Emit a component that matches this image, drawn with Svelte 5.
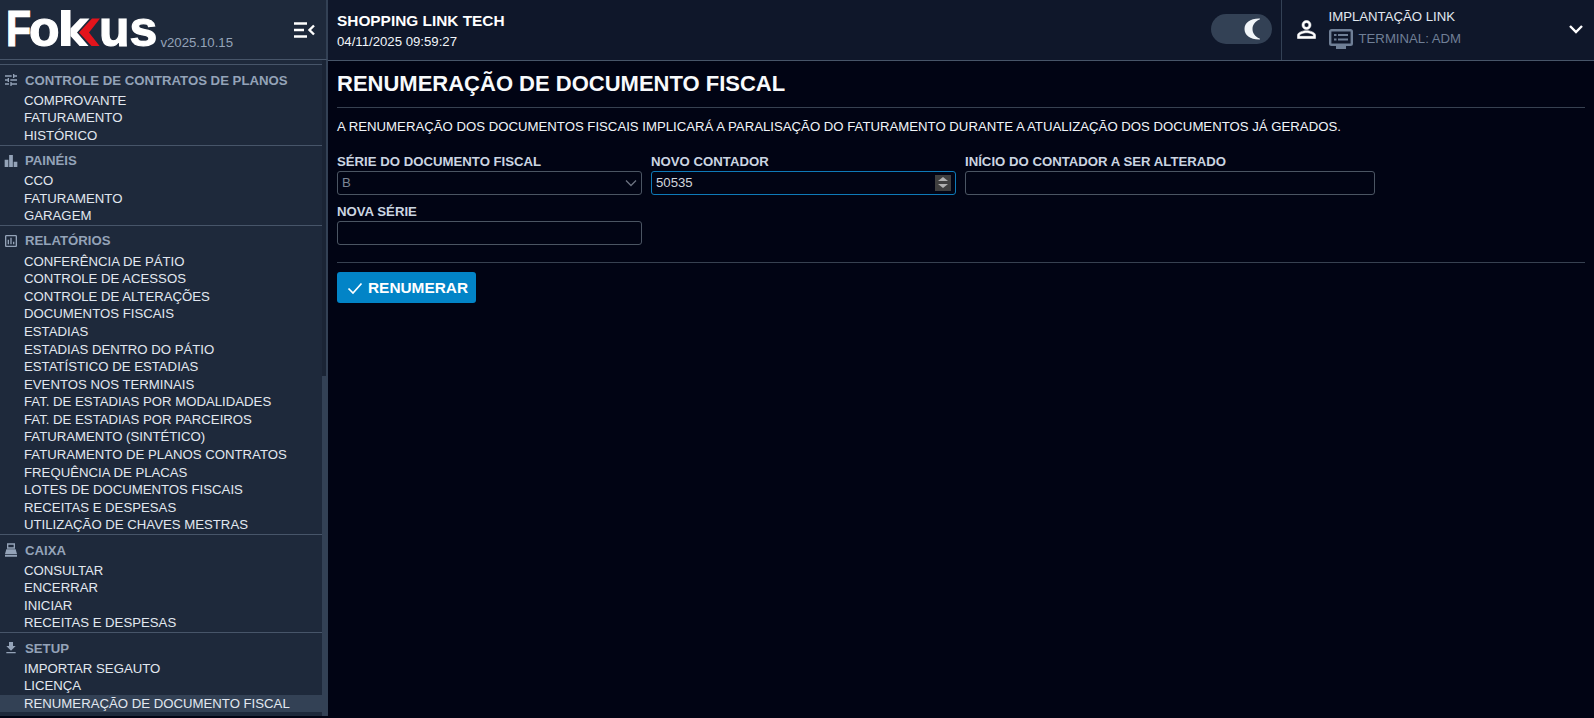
<script>
	const sections = [
		{ icon: 'tune', title: 'CONTROLE DE CONTRATOS DE PLANOS', items: ['COMPROVANTE', 'FATURAMENTO', 'HISTÓRICO'] },
		{ icon: 'bars', title: 'PAINÉIS', items: ['CCO', 'FATURAMENTO', 'GARAGEM'] },
		{
			icon: 'report',
			title: 'RELATÓRIOS',
			items: [
				'CONFERÊNCIA DE PÁTIO',
				'CONTROLE DE ACESSOS',
				'CONTROLE DE ALTERAÇÕES',
				'DOCUMENTOS FISCAIS',
				'ESTADIAS',
				'ESTADIAS DENTRO DO PÁTIO',
				'ESTATÍSTICO DE ESTADIAS',
				'EVENTOS NOS TERMINAIS',
				'FAT. DE ESTADIAS POR MODALIDADES',
				'FAT. DE ESTADIAS POR PARCEIROS',
				'FATURAMENTO (SINTÉTICO)',
				'FATURAMENTO DE PLANOS CONTRATOS',
				'FREQUÊNCIA DE PLACAS',
				'LOTES DE DOCUMENTOS FISCAIS',
				'RECEITAS E DESPESAS',
				'UTILIZAÇÃO DE CHAVES MESTRAS'
			]
		},
		{ icon: 'register', title: 'CAIXA', items: ['CONSULTAR', 'ENCERRAR', 'INICIAR', 'RECEITAS E DESPESAS'] },
		{ icon: 'download', title: 'SETUP', items: ['IMPORTAR SEGAUTO', 'LICENÇA', 'RENUMERAÇÃO DE DOCUMENTO FISCAL'] }
	];
	const active = 'RENUMERAÇÃO DE DOCUMENTO FISCAL';
</script>

<div class="page">
	<aside class="sidebar">
		<div class="brand">
			<div class="logo">
				<span class="logo-f">F</span><span class="logo-text">o</span><svg class="logo-k" viewBox="0 0 41 36.500" width="41" height="36.500">
					<path d="M0 0h9.500v36.500H0z" fill="#fff" />
					<path d="M9.500 18.500 19 8.500h9.500L16 22.500l12 14h-9l-9.500-10.500z" fill="#fff" />
					<path d="M18 22.500 31 8.500h8L28 22.500l11 14h-8z" fill="#e3141c" />
				</svg><span class="logo-text logo-us">us</span>
			</div>
			<span class="version">v2025.10.15</span>
			<button class="menu-toggle" aria-label="Recolher menu">
				<svg viewBox="0 0 24 24" width="24" height="24">
					<path d="M2 5.500h13M2 12h10M2 18.500h13" stroke="#fff" stroke-width="2.400" fill="none" />
					<path d="M22 7.500 17.500 12l4.500 4.500" stroke="#fff" stroke-width="2.400" fill="none" />
				</svg>
			</button>
		</div>
		<div class="menu-wrap">
			<nav class="menu">
				{#each sections as section}
					<section class="group">
						<h3>
							<svg class="group-icon" viewBox="0 0 24 24" width="16" height="16">
								{#if section.icon === 'tune'}
									<path d="M3 17v2h6v-2H3zM3 5v2h10V5H3zm10 16v-2h8v-2h-8v-2h-2v6h2zM7 9v2H3v2h4v2h2V9H7zm14 4v-2H11v2h10zm-6-4h2V7h4V5h-4V3h-2v6z" fill="currentColor" />
								{:else if section.icon === 'bars'}
									<path d="M2.500 10h5.500v11H2.500zM9.200 3h5.600v18H9.200zM16 13h5.500v8H16z" fill="currentColor" />
								{:else if section.icon === 'report'}
									<path d="M19 3H5c-1.100 0-2 .9-2 2v14c0 1.100.9 2 2 2h14c1.100 0 2-.9 2-2V5c0-1.100-.9-2-2-2zm0 16H5V5h14v14zM7 10h2v7H7zm4-3h2v10h-2zm4 6h2v4h-2z" fill="currentColor" />
								{:else if section.icon === 'register'}
									<path d="M6 2h12v8H6zM8 4v4h8V4zM5 11h14l2 7H3zM3 19h18v3H3z" fill="currentColor" fill-rule="evenodd" />
								{:else}
									<path d="M19 9h-4V3H9v6H5l7 7 7-7zM5 18v2h14v-2H5z" fill="currentColor" />
								{/if}
							</svg>
							{section.title}
						</h3>
						<ul>
							{#each section.items as item}
								<li class:active={item === active}>{item}</li>
							{/each}
						</ul>
					</section>
				{/each}
			</nav>
			<div class="scrollbar"><div class="thumb"></div></div>
		</div>
	</aside>

	<div class="main">
		<header class="topbar">
			<div class="company">
				<strong>SHOPPING LINK TECH</strong>
				<span>04/11/2025 09:59:27</span>
			</div>
			<div class="theme-toggle">
				<svg class="moon" viewBox="0 0 17 22" width="17" height="22">
					<path d="M15 .5C6 .5.5 5 .5 11S6 21.500 15 21.500c1 0 1.500-.5.5-1C11 18.500 8.500 15 8.500 11S11 3.500 15.500 1.500c1-.5.5-1-.5-1z" fill="#f1f5f9" />
				</svg>
			</div>
			<div class="user">
				<svg class="user-icon" viewBox="0 0 24 24" width="27" height="27">
					<path d="M12 5.900a2.100 2.100 0 1 1 0 4.200 2.100 2.100 0 0 1 0-4.200m0 9c2.970 0 6.100 1.460 6.100 2.100v1.100H5.900V17c0-.64 3.130-2.100 6.100-2.100M12 4C9.790 4 8 5.790 8 8s1.790 4 4 4 4-1.790 4-4-1.790-4-4-4zm0 9c-2.670 0-8 1.340-8 4v3h16v-3c0-2.660-5.330-4-8-4z" fill="#fff" stroke="#fff" stroke-width=".5" />
				</svg>
				<div class="user-text">
					<span class="user-name">IMPLANTAÇÃO LINK</span>
					<span class="terminal">
						<svg viewBox="0 0 24 20" width="24" height="20">
							<path d="M2.500 1.200h19a1.300 1.300 0 0 1 1.300 1.300v12a1.300 1.300 0 0 1-1.300 1.300h-19a1.300 1.300 0 0 1-1.300-1.300v-12a1.300 1.300 0 0 1 1.300-1.300z" stroke="currentColor" stroke-width="2.400" fill="none" />
							<path d="M5 5h2.500v2H5zM9 5h10v2H9zM5 9.500h2.500v2H5zM9 9.500h10v2H9z" fill="currentColor" />
							<path d="M7 17h10v3H7z" fill="currentColor" />
						</svg>
						TERMINAL: ADM
					</span>
				</div>
				<svg class="chevron" viewBox="0 0 16 16" width="16" height="16">
					<path d="M2 5l6 6 6-6" stroke="#fff" stroke-width="2.400" fill="none" />
				</svg>
			</div>
		</header>

		<main class="content">
			<h1>RENUMERAÇÃO DE DOCUMENTO FISCAL</h1>
			<hr />
			<p class="notice">
				A RENUMERAÇÃO DOS DOCUMENTOS FISCAIS IMPLICARÁ A PARALISAÇÃO DO FATURAMENTO DURANTE A ATUALIZAÇÃO DOS DOCUMENTOS JÁ GERADOS.
			</p>
			<div class="form">
				<div class="field">
					<span class="label">SÉRIE DO DOCUMENTO FISCAL</span>
					<div class="control select">
						<span>B</span>
						<svg viewBox="0 0 12 8" width="12" height="8">
							<path d="M1 1.500l5 5 5-5" stroke="#6b7280" stroke-width="1.300" fill="none" />
						</svg>
					</div>
				</div>
				<div class="field">
					<span class="label">NOVO CONTADOR</span>
					<div class="control focused">
						<span>50535</span>
						<span class="spinner">
							<i class="up"></i>
							<i class="down"></i>
						</span>
					</div>
				</div>
				<div class="field">
					<label class="label" for="inicio">INÍCIO DO CONTADOR A SER ALTERADO</label>
					<input id="inicio" class="control" />
				</div>
				<div class="field">
					<label class="label" for="nova">NOVA SÉRIE</label>
					<input id="nova" class="control" />
				</div>
			</div>
			<hr class="rule-bottom" />
			<button class="submit">
				<svg viewBox="0 0 16 16" width="16" height="16">
					<path d="M1.500 8.500l4.500 4.500 8.500-9.500" stroke="#fff" stroke-width="1.700" fill="none" />
				</svg>
				RENUMERAR
			</button>
		</main>
	</div>
</div>

<style>
	:global(body) {
		margin: 0;
		background: #010414;
		font-family: 'Liberation Sans', Arial, sans-serif;
	}

	.page {
		display: flex;
		align-items: flex-start;
		height: 718px;
		overflow: hidden;
		color: #e5e7eb;
	}

	.sidebar {
		width: 328px;
		height: 716px;
		flex: none;
		background: #1e293b;
		display: flex;
		flex-direction: column;
	}

	.brand {
		height: 60px;
		flex: none;
		display: flex;
		align-items: flex-start;
		position: relative;
		padding-left: 6px;
		box-sizing: border-box;
		border-bottom: 1px solid #475569;
		border-right: 2px solid #334155;
	}

	.logo {
		display: flex;
		align-items: baseline;
		line-height: 59px;
	}

	.logo-text,
	.logo-f {
		font-size: 50px;
		font-weight: 700;
		color: #fff;
		-webkit-text-stroke: 1.2px #fff;
	}

	.logo-f {
		display: inline-block;
		width: 23px;
		transform: scaleX(0.82);
		transform-origin: left;
	}

	.logo-k {
		margin-left: 1.5px;
	}

	.logo-us {
		margin-left: -3px;
	}

	.version {
		color: #94a3b8;
		font-size: 13.2px;
		margin: 35px 0 0 3px;
	}

	.menu-toggle {
		position: absolute;
		right: 10px;
		top: 18px;
		padding: 0;
		background: none;
		border: 0;
		line-height: 0;
	}

	.menu-wrap {
		flex: 1;
		min-height: 0;
		display: flex;
	}

	.menu {
		flex: 1;
		overflow: hidden;
		padding-top: 4.2px;
	}

	.scrollbar {
		width: 6px;
		flex: none;
		background: #334155;
	}

	.thumb {
		width: 4px;
		height: 316px;
		background: #1a2435;
	}

	.group {
		border-top: 1px solid #475569;
		padding-top: 5px;
	}

	h3 {
		margin: 0 0 1.6px;
		height: 20px;
		display: flex;
		align-items: center;
		gap: 6px;
		padding-left: 3px;
		color: #94a3b8;
		font-size: 13.2px;
		font-weight: 700;
	}

	ul {
		list-style: none;
		margin: 0;
		padding: 0;
	}

	li {
		height: 17.6px;
		line-height: 17.6px;
		padding-left: 24px;
		font-size: 13.2px;
		color: #e2e8f0;
	}

	li.active {
		background: #334155;
	}

	.main {
		flex: 1;
		min-width: 0;
	}

	.topbar {
		height: 61px;
		box-sizing: border-box;
		background: #0f172a;
		border-bottom: 1px solid #475569;
		display: flex;
		align-items: center;
		padding-left: 9px;
	}

	.company {
		flex: 1;
		display: flex;
		flex-direction: column;
		gap: 4px;
		font-size: 13.2px;
		color: #f1f5f9;
	}

	.company strong {
		font-size: 15.4px;
		color: #fff;
	}

	.theme-toggle {
		width: 61px;
		height: 30px;
		border-radius: 15px;
		background: #334155;
		position: relative;
		margin: 0 9px 2px 0;
	}

	.moon {
		position: absolute;
		left: 33px;
		top: 4px;
	}

	.user {
		width: 313px;
		height: 60px;
		box-sizing: border-box;
		border-left: 1px solid #334155;
		display: flex;
		align-items: center;
		padding-left: 11px;
		position: relative;
	}

	.user-icon {
		margin-bottom: 2px;
	}

	.user-text {
		margin: 0 0 2px 8.5px;
		display: flex;
		flex-direction: column;
		gap: 4px;
		font-size: 13.2px;
	}

	.user-name {
		color: #e2e8f0;
	}

	.terminal {
		display: flex;
		align-items: center;
		height: 22px;
		gap: 6px;
		color: #6f7f96;
	}

	.chevron {
		position: absolute;
		right: 10px;
		top: 21px;
	}

	.content {
		padding: 10px 9px 0;
	}

	h1 {
		margin: 0;
		font-size: 22px;
		line-height: 26px;
		color: #f8fafc;
	}

	hr {
		border: 0;
		border-top: 1px solid #374151;
		margin: 10px 0 0;
	}

	.notice {
		margin: 10px 0 0;
		font-size: 13.2px;
		line-height: 17px;
		color: #f1f5f9;
	}

	.form {
		display: grid;
		grid-template-columns: 305px 305px 410px;
		column-gap: 9px;
		row-gap: 8px;
		margin-top: 18px;
	}

	.field {
		display: flex;
		flex-direction: column;
	}

	.label {
		font-size: 13.2px;
		font-weight: 700;
		line-height: 18px;
		color: #cbd5e1;
	}

	.control {
		height: 24px;
		box-sizing: border-box;
		border: 1px solid #4b5563;
		border-radius: 3px;
		background: transparent;
		display: flex;
		align-items: center;
		justify-content: space-between;
		padding: 0 4px 1px;
		font-size: 13.2px;
		color: #d1d5db;
		font-family: inherit;
		outline: none;
	}

	.select {
		color: #7b8494;
	}

	.focused {
		border-color: #0e7ab8;
	}

	.spinner {
		width: 16px;
		height: 16px;
		background: #3f3f3f;
		display: flex;
		flex-direction: column;
		align-items: center;
		justify-content: space-evenly;
	}

	.spinner i {
		width: 0;
		height: 0;
		border-left: 5px solid transparent;
		border-right: 5px solid transparent;
	}

	.up {
		border-bottom: 4px solid #b0b0b0;
	}

	.down {
		border-top: 4px solid #b0b0b0;
	}

	.rule-bottom {
		margin-top: 17px;
	}

	.submit {
		margin-top: 9px;
		height: 31px;
		width: 139px;
		border: 0;
		border-radius: 3px;
		background: #0284c7;
		color: #fff;
		font-family: inherit;
		font-size: 15.4px;
		font-weight: 700;
		display: flex;
		align-items: center;
		gap: 5px;
		padding: 0 0 0 10px;
	}

	.submit svg {
		flex: none;
	}
</style>
